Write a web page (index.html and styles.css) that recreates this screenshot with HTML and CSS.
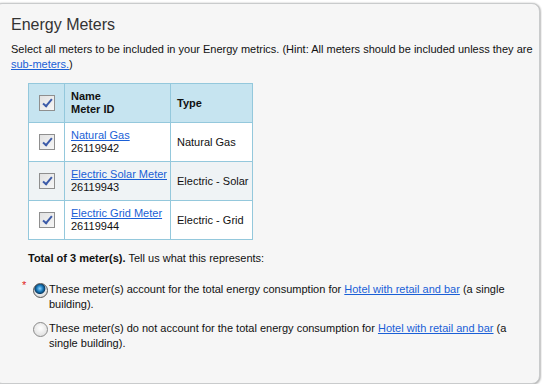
FILE: index.html
```html
<!DOCTYPE html>
<html lang="en">
<head>
    <meta charset="UTF-8">
    <title>Energy Meters</title>
    <link rel="stylesheet" href="styles.css">
</head>
<body>
    <div class="panel">
        <h2>Energy Meters</h2>
        <p class="intro">Select all meters to be included in your Energy metrics. (Hint: All meters should be included unless they are <a href="#">sub-meters.</a>)</p>

        <table class="meters">
            <tr class="head">
                <th class="check"><span class="box"></span></th>
                <th class="name">Name<br>Meter ID</th>
                <th class="type">Type</th>
            </tr>
            <tr>
                <td class="check"><span class="box"></span></td>
                <td class="name"><a href="#">Natural Gas</a><br>26119942</td>
                <td class="type">Natural Gas</td>
            </tr>
            <tr class="alt">
                <td class="check"><span class="box"></span></td>
                <td class="name"><a href="#">Electric Solar Meter</a><br>26119943</td>
                <td class="type">Electric - Solar</td>
            </tr>
            <tr>
                <td class="check"><span class="box"></span></td>
                <td class="name"><a href="#">Electric Grid Meter</a><br>26119944</td>
                <td class="type">Electric - Grid</td>
            </tr>
        </table>

        <p class="total"><b>Total of 3 meter(s).</b> Tell us what this represents:</p>

        <div class="choice">
            <span class="req">*</span>
            <span class="radio on"></span>
            <p class="label">These meter(s) account for the total energy consumption for <a href="#">Hotel with retail and bar</a> (a single<br>building).</p>
        </div>
        <div class="choice">
            <span class="req"></span>
            <span class="radio"></span>
            <p class="label">These meter(s) do not account for the total energy consumption for <a href="#">Hotel with retail and bar</a> (a<br>single building).</p>
        </div>
    </div>
</body>
</html>
```

FILE: styles.css
```css
body {
    margin: 0;
    background: #ffffff;
    font-family: "Liberation Sans", Arial, sans-serif;
    font-size: 11px;
    color: #111;
    overflow: hidden;
}

a {
    color: #1a5fd6;
}

.panel {
    margin: 3px 2px 0 -6px;
    height: 381px;
    box-sizing: border-box;
    padding: 12px 0 0 16px;
    background: #f6f6f6;
    border: 1px solid #c9cbcc;
    border-radius: 8px;
    box-shadow: 0 0 2px rgba(0, 0, 0, 0.25), 1px 1px 2px rgba(0, 0, 0, 0.2);
}

h2 {
    margin: 0 0 8px;
    font-size: 16px;
    font-weight: normal;
    color: #333;
}

.intro {
    margin: 0 0 11px;
    line-height: 15px;
    padding-right: 6px;
}

.meters {
    margin-left: 17px;
    border-collapse: collapse;
    table-layout: fixed;
    background: #ffffff;
}

.meters th,
.meters td {
    border: 1px solid #94c8dc;
    height: 38px;
    padding: 0 0 0 6px;
    text-align: left;
    line-height: 13px;
    white-space: nowrap;
}

.meters th {
    background: #c6e4f0;
    font-weight: bold;
}

.meters tr.alt td {
    background: #eff3f5;
}

.meters .check {
    width: 35px;
    padding: 0;
    text-align: center;
}

.meters .name {
    width: 99px;
}

.meters .type {
    width: 75px;
}

.box {
    display: inline-block;
    width: 14px;
    height: 14px;
    border: 1px solid #8f8f8f;
    background: linear-gradient(135deg, #e2e2e2, #f6f6f6);
    position: relative;
    vertical-align: middle;
}

.box::after {
    content: "";
    position: absolute;
    left: 5px;
    top: 1px;
    width: 3px;
    height: 8px;
    border: solid #3b5aa8;
    border-width: 0 2px 2px 0;
    transform: rotate(40deg);
}

.total {
    margin: 12px 0 18px 17px;
}

.choice {
    display: flex;
    margin: 0 20px 9px 6px;
    line-height: 15px;
}

.req {
    flex: none;
    width: 11px;
    padding-left: 5px;
    color: #e01818;
    font-size: 11px;
    margin-top: -4px;
}

.radio {
    flex: none;
    width: 13px;
    height: 13px;
    border-radius: 50%;
    border: 1px solid #8a8a8a;
    background: radial-gradient(circle at 50% 40%, #ffffff, #d8d8d8);
    margin-top: 1px;
}

.radio.on {
    background: radial-gradient(circle at 45% 35%, #8fd3ff 0, #1c7ec0 3px, #0a3f6a 5px, #e8e8e8 6px, #cfcfcf 100%);
    border-color: #555;
}

.label {
    margin: 0;
    padding-left: 1px;
}
```
